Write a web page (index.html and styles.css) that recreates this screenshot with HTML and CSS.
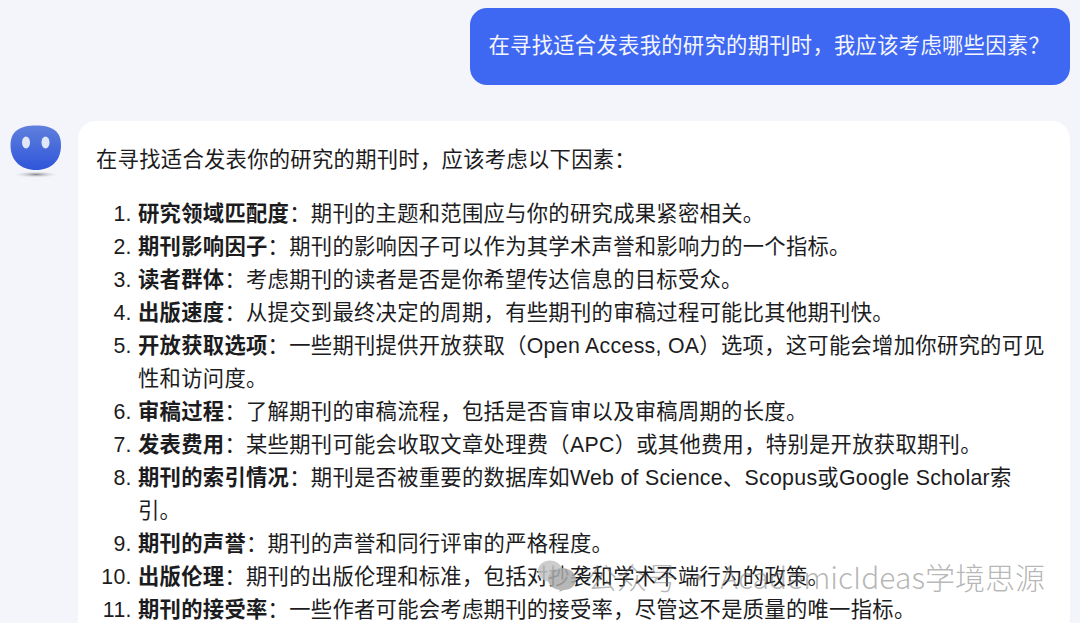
FILE: index.html
```html
<!DOCTYPE html>
<html lang="zh-CN">
<head>
<meta charset="utf-8">
<title>Chat</title>
<link rel="stylesheet" href="styles.css">
</head>
<body>
<div class="chat">
  <div class="row-user"><div class="bubble-user">在寻找适合发表我的研究的期刊时，我应该考虑哪些因素？</div></div>
  <div class="row-bot">
    <div class="avatar">
      <svg width="54" height="56" viewBox="0 0 54 56">
        <defs>
          <linearGradient id="face" x1="0" y1="0" x2="0" y2="1"><stop offset="0" stop-color="#5f80dc"/><stop offset="1" stop-color="#2f55da"/></linearGradient>
          <radialGradient id="shade"><stop offset="0" stop-color="#85858b"/><stop offset="1" stop-color="#f3f5fa" stop-opacity="0"/></radialGradient>
        </defs>
        <ellipse cx="26" cy="49.500" rx="24" ry="3.500" fill="url(#shade)"/>
        <path d="M26 0.500C42 0.500 51 6 51 20C51 36 41 45 26 45C11 45 0.500 36 0.500 20C0.500 6 10 0.500 26 0.500Z" fill="url(#face)"/>
        <ellipse cx="16" cy="17.500" rx="4" ry="6" fill="#dfe6f6"/>
        <ellipse cx="35.500" cy="17.500" rx="4" ry="6" fill="#dfe6f6"/>
      </svg>
    </div>
    <div class="bubble-bot">
      <p class="intro">在寻找适合发表你的研究的期刊时，应该考虑以下因素：</p>
      <ol class="factors">
        <li><b>研究领域匹配度</b>：期刊的主题和范围应与你的研究成果紧密相关。</li>
        <li><b>期刊影响因子</b>：期刊的影响因子可以作为其学术声誉和影响力的一个指标。</li>
        <li><b>读者群体</b>：考虑期刊的读者是否是你希望传达信息的目标受众。</li>
        <li><b>出版速度</b>：从提交到最终决定的周期，有些期刊的审稿过程可能比其他期刊快。</li>
        <li><b>开放获取选项</b>：一些期刊提供开放获取（Open Access, OA）选项，这可能会增加你研究的可见性和访问度。</li>
        <li><b>审稿过程</b>：了解期刊的审稿流程，包括是否盲审以及审稿周期的长度。</li>
        <li><b>发表费用</b>：某些期刊可能会收取文章处理费（APC）或其他费用，特别是开放获取期刊。</li>
        <li><b>期刊的索引情况</b>：期刊是否被重要的数据库如Web of Science、Scopus或Google Scholar索引。</li>
        <li><b>期刊的声誉</b>：期刊的声誉和同行评审的严格程度。</li>
        <li><b>出版伦理</b>：期刊的出版伦理和标准，包括对抄袭和学术不端行为的政策。</li>
        <li><b>期刊的接受率</b>：一些作者可能会考虑期刊的接受率，尽管这不是质量的唯一指标。</li>
      </ol>
    </div>
  </div>
</div>
<div class="watermark">
  <svg class="wm-icon" width="40" height="34" viewBox="0 0 40 34">
    <ellipse cx="13" cy="12" rx="12" ry="10.500" fill="#c4c4c4"/>
    <path d="M25 9C33 9 39 14 39 20.500C39 27 33 31 27 31L22 33L23 31C16 30 11 26 11 20.500C11 14 17 9 25 9Z" fill="#ababab"/>
  </svg>
  <span>公众号 · AcademicIdeas学境思源</span>
</div>
</body>
</html>
```
FILE: styles.css
```css
html, body {
  margin: 0;
  height: 100%;
  overflow: hidden;
  background: #f3f5fa;
}
body {
  font-family: "Liberation Sans", "Noto Sans CJK SC", sans-serif;
  color: #1c1c1e;
  font-size: 21.3px;
  letter-spacing: 0.3px;
}
.chat {
  display: flex;
  flex-direction: column;
  gap: 36px;
  padding: 8px 10px 0 10px;
}
.row-user {
  display: flex;
  justify-content: flex-end;
}
.bubble-user {
  background: #3f68f2;
  color: #f4f6fe;
  border-radius: 17px;
  height: 77px;
  line-height: 77px;
  padding: 0 20px 0 18px;
  white-space: nowrap;
}
.row-bot {
  display: flex;
  gap: 16px;
}
.avatar {
  flex: none;
  width: 52px;
  height: 56px;
  padding-top: 4px;
}
.bubble-bot {
  flex: 1;
  background: #fff;
  border-radius: 18px 18px 0 0;
  padding: 23px 18px 0 18px;
  height: 500px;
}
.intro {
  margin: 0 0 21px;
  line-height: 33px;
}
.factors {
  margin: 0;
  padding: 0 0 0 42px;
}
.factors li {
  line-height: 33px;
}
.factors b {
  font-weight: 700;
}
.watermark {
  position: absolute;
  left: 537px;
  top: 554px;
  display: flex;
  align-items: center;
  color: rgba(120, 120, 120, 0.55);
  font-size: 30px;
  font-weight: 300;
  letter-spacing: 0;
  white-space: nowrap;
  font-family: "Noto Sans CJK SC", "Noto Sans", sans-serif;
}
.wm-icon {
  margin-right: 10px;
  opacity: 0.85;
}
```
